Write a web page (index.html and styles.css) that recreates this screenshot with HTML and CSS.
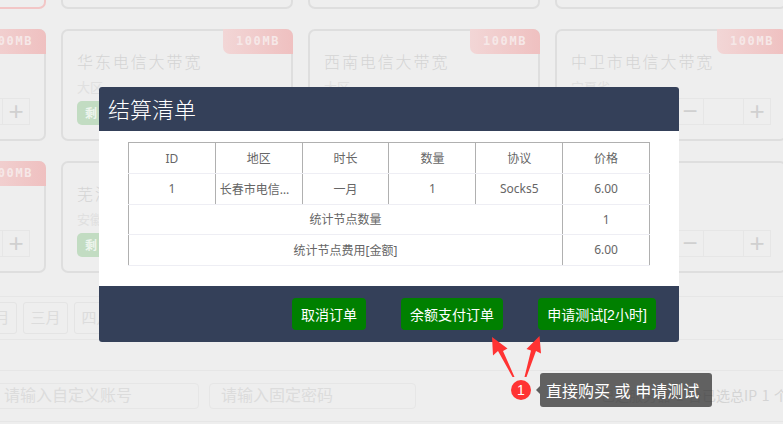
FILE: index.html
```html
<!DOCTYPE html>
<html lang="zh-CN">
<head>
<meta charset="utf-8">
<title>结算清单</title>
<link rel="stylesheet" href="styles.css">
</head>
<body>
<main class="page">
  <section class="cards">
    <article class="card card-hot"></article>
    <article class="card"></article>
    <article class="card"></article>
    <article class="card"></article>

    <article class="card">
      <span class="badge">100MB</span>
      <div class="stepper"><span class="step">−</span><span class="qty"></span><span class="step">+</span></div>
    </article>
    <article class="card">
      <span class="badge">100MB</span>
      <h3 class="name">华东电信大带宽</h3>
      <p class="area">大区</p>
      <span class="tag">剩余</span>
    </article>
    <article class="card">
      <span class="badge">100MB</span>
      <h3 class="name">西南电信大带宽</h3>
      <p class="area">大区</p>
    </article>
    <article class="card">
      <span class="badge">100MB</span>
      <h3 class="name">中卫市电信大带宽</h3>
      <p class="area">宁夏省</p>
      <div class="stepper"><span class="step">−</span><span class="qty"></span><span class="step">+</span></div>
    </article>

    <article class="card">
      <span class="badge">100MB</span>
      <div class="stepper"><span class="step">−</span><span class="qty"></span><span class="step">+</span></div>
    </article>
    <article class="card">
      <h3 class="name">芜湖市电信大带宽</h3>
      <p class="area">安徽省</p>
      <span class="tag">剩余</span>
    </article>
    <article class="card"></article>
    <article class="card">
      <div class="stepper"><span class="step">−</span><span class="qty"></span><span class="step">+</span></div>
    </article>
  </section>

  <section class="months">
    <span class="month">二月</span>
    <span class="month">三月</span>
    <span class="month">四月</span>
  </section>

  <section class="account">
    <span class="field field-user">请输入自定义账号</span>
    <span class="field field-pass">请输入固定密码</span>
    <span class="summary">已选服务器 1 台已选总IP 1 个</span>
  </section>
</main>

<div class="modal">
  <header class="modal-head">结算清单</header>
  <div class="modal-body">
    <table class="bill">
      <thead>
        <tr><th>ID</th><th>地区</th><th>时长</th><th>数量</th><th>协议</th><th>价格</th></tr>
      </thead>
      <tbody>
        <tr class="row-item"><td>1</td><td class="clip">长春市电信大带宽</td><td>一月</td><td>1</td><td>Socks5</td><td>6.00</td></tr>
        <tr><td colspan="5">统计节点数量</td><td>1</td></tr>
        <tr><td colspan="5">统计节点费用[金额]</td><td>6.00</td></tr>
      </tbody>
    </table>
  </div>
  <footer class="modal-foot">
    <button class="btn btn-cancel">取消订单</button>
    <button class="btn btn-pay">余额支付订单</button>
    <button class="btn btn-test">申请测试[2小时]</button>
  </footer>
</div>

<svg class="arrows" width="62" height="42" viewBox="0 0 62 42" aria-hidden="true">
  <path d="M12 1 L27.5 12.5 L23 15 L34.5 41 L32.5 41 L18 15 L13 19.5 Z" fill="#ff3333"/>
  <path d="M59.5 0 L61 17.5 L56 15 L46.5 41 L44.5 41 L51 14.5 L46.5 13 Z" fill="#ff3333"/>
</svg>
<span class="step-dot">1</span>
<div class="tip">直接购买 或 申请测试</div>
</body>
</html>
```

FILE: styles.css
```css
* { box-sizing: border-box; }
html, body { margin: 0; height: 100%; }
body {
  overflow: hidden;
  background: #eeeeee;
  font-family: "Noto Sans CJK SC", "Liberation Sans", sans-serif;
  color: #d0d0d0;
}
.page { width: 1200px; margin: -103px 0 0 -186px; }

.cards {
  display: grid;
  grid-template-columns: repeat(4, 232px);
  grid-auto-rows: 112px;
  column-gap: 15px;
  row-gap: 20px;
}
.card {
  position: relative;
  border: 2px solid #dedede;
  border-radius: 7px;
  padding: 18px 14px 0;
}
.card-hot { border-color: #f2c6c6; }
.badge {
  position: absolute;
  top: -2px;
  right: -2px;
  width: 70px;
  height: 25px;
  border-radius: 0 7px 0 7px;
  background: linear-gradient(90deg, #f2d6d6, #efc0c0);
  color: #f6e8e8;
  font: bold 12px/25px "DejaVu Sans Mono", monospace;
  letter-spacing: 1.6px;
  text-align: center;
}
.name {
  margin: 0;
  font-size: 16px;
  font-weight: 300;
  line-height: 24px;
  letter-spacing: 1.9px;
  color: #d4d4d4;
}
.area {
  margin: 6px 0 0;
  font-size: 13px;
  line-height: 16px;
  color: #e0e0e0;
}
.tag {
  display: block;
  width: fit-content;
  margin-top: 6px;
  padding: 0 8px;
  border-radius: 5px;
  background: #c2dcc2;
  color: #eef5ee;
  font-size: 12px;
  font-weight: 700;
  line-height: 24px;
  letter-spacing: 2px;
}
.stepper {
  position: absolute;
  right: 14px;
  top: 67px;
  display: flex;
  height: 27px;
  border: 1px solid #e6e6e6;
}
.step {
  width: 26px;
  font: 26px/24px "Liberation Sans", sans-serif;
  text-align: center;
  color: #d0d0d0;
}
.qty {
  width: 41px;
  border-left: 1px solid #e6e6e6;
  border-right: 1px solid #e6e6e6;
}

.months {
  display: flex;
  gap: 6px;
  margin-top: 23px;
  padding: 5px 0 5px 158px;
  border-top: 1px solid #e6e6e6;
  border-bottom: 1px solid #e6e6e6;
  height: 44px;
}
.month {
  width: 45px;
  height: 32px;
  border: 1px solid #e4e4e4;
  border-radius: 3px;
  font-size: 15px;
  line-height: 27px;
  text-align: center;
  color: #dcdcdc;
}

.account {
  position: relative;
  display: flex;
  gap: 10px;
  margin-top: 30px;
  height: 52px;
  padding: 12px 0 0 100px;
  border-top: 1px solid #e6e6e6;
  border-bottom: 1px solid #e6e6e6;
}
.field {
  height: 26px;
  border: 1px solid #e6e6e6;
  border-radius: 4px;
  font-size: 16px;
  line-height: 21px;
  color: #dcdcdc;
}
.field-user { width: 285px; padding-left: 89px; }
.field-pass { width: 207px; padding-left: 11px; }
.summary {
  position: absolute;
  left: 787px;
  top: 12px;
  font-size: 14px;
  line-height: 24px;
  word-spacing: 1.5px;
  color: #d4d4d4;
  white-space: nowrap;
}

.modal {
  position: absolute;
  left: 99px;
  top: 87px;
  width: 580px;
  height: 255px;
  display: flex;
  flex-direction: column;
  border-radius: 3px;
  background: #ffffff;
  overflow: hidden;
}
.modal-head {
  height: 44px;
  padding-left: 9px;
  background: #344059;
  color: #ffffff;
  font-size: 22px;
  font-weight: 300;
  line-height: 43px;
}
.modal-body { flex: 1; padding: 11px 29px 0; }
.bill {
  width: 522px;
  table-layout: fixed;
  border-collapse: collapse;
  font-family: "Noto Sans", "Noto Sans CJK SC", sans-serif;
  font-size: 12px;
  color: #666666;
  text-align: center;
}
.bill th, .bill td {
  height: 31px;
  padding: 0 4px;
  font-weight: 400;
  border: 1px solid #eeeef4;
  border-left-color: #b0b0b0;
  border-right-color: #b0b0b0;
}
.bill th { border-top-color: #b0b0b0; }
.bill td { height: 30.5px; }
.clip { white-space: nowrap; overflow: hidden; text-overflow: ellipsis; }
.modal-foot {
  height: 56px;
  display: flex;
  align-items: center;
  padding-left: 193px;
  background: #344059;
}
.btn {
  height: 32px;
  padding: 0;
  border: 0;
  border-radius: 4px;
  background: #008000;
  color: #ffffff;
  font-family: "Liberation Sans", "Noto Sans CJK SC", sans-serif;
  font-size: 14px;
}
.btn-cancel { width: 74px; }
.btn-pay { width: 102px; margin-left: 35px; }
.btn-test { width: 118px; margin-left: 35px; }

.arrows {
  position: absolute;
  left: 480px;
  top: 336px;
  overflow: visible;
}
.step-dot {
  position: absolute;
  left: 511px;
  top: 380px;
  width: 20px;
  height: 20px;
  border-radius: 50%;
  background: #ff3333;
  color: #ffffff;
  font: 14px/20px "Liberation Sans", sans-serif;
  text-align: center;
}
.tip {
  position: absolute;
  left: 540px;
  top: 373px;
  width: 172px;
  height: 34px;
  padding-left: 6px;
  border-radius: 3px;
  background: rgba(50, 50, 50, 0.75);
  color: #ffffff;
  font-size: 16px;
  line-height: 34px;
  word-spacing: 1px;
  white-space: nowrap;
}
.tip::before {
  content: "";
  position: absolute;
  left: -4px;
  top: 13px;
  border-top: 4px solid transparent;
  border-bottom: 4px solid transparent;
  border-right: 4px solid #5e5e5e;
}
```
